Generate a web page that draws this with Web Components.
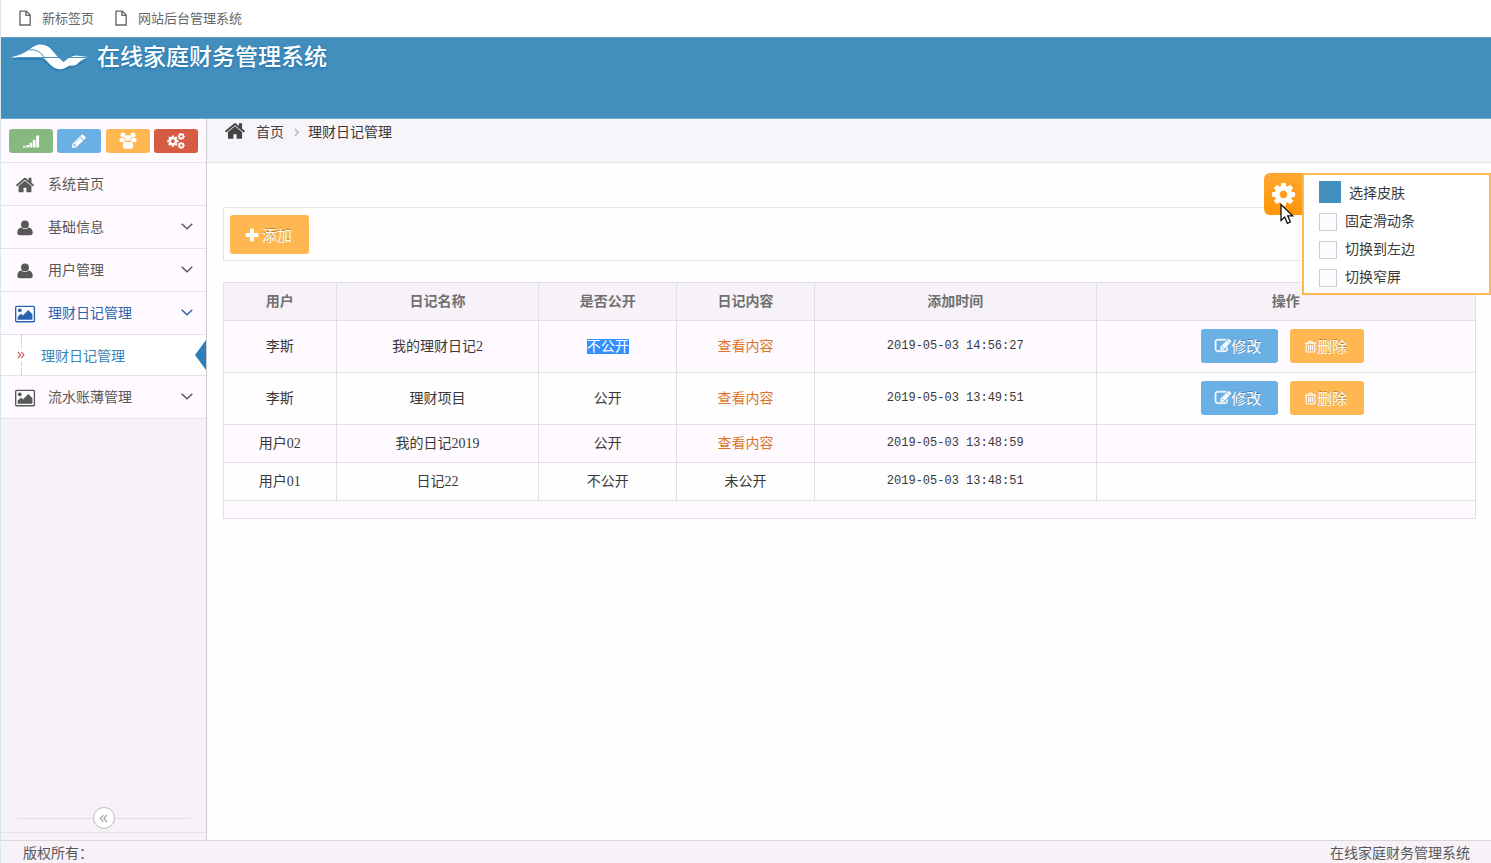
<!DOCTYPE html>
<html lang="zh-CN">
<head>
<meta charset="utf-8">
<title>在线家庭财务管理系统</title>
<style>
    html, body {
        margin: 0;
        height: 100%;
    }
    body {
        font-family: "Noto Sans CJK SC", sans-serif;
        font-size: 14px;
        line-height: 20px;
        color: #393939;
        background: #fefefe;
        --line: #e3e2e5;
        --panel: #f6f2f8;
        --tint: #fefaff;
        --blue: #428ebd;
        --orange: #ffb752;
    }
</style>
</head>
<body>
<finance-app>
    <bookmark-bar slot="top"></bookmark-bar>
    <app-header slot="top" data-title="在线家庭财务管理系统"></app-header>
    <side-bar slot="side">
        <side-item data-icon="home" data-label="系统首页"></side-item>
        <side-item data-icon="user" data-label="基础信息" data-more></side-item>
        <side-item data-icon="user" data-label="用户管理" data-more></side-item>
        <side-item data-icon="image" data-label="理财日记管理" data-more class="open">
            <side-subitem data-label="理财日记管理"></side-subitem>
        </side-item>
        <side-item data-icon="image" data-label="流水账薄管理" data-more></side-item>
    </side-bar>
    <bread-crumbs data-page="理财日记管理"></bread-crumbs>
    <tool-bar>
        <action-button class="large" data-icon="plus" data-color="#ffb752">添加</action-button>
    </tool-bar>
    <diary-table></diary-table>
    <skin-settings slot="settings"></skin-settings>
    <app-footer slot="bottom">
        <span>版权所有：</span>
        <span>在线家庭财务管理系统</span>
    </app-footer>
</finance-app>

<script>
const ICONS = {
    home: '<path d="M1408 992v480q0 26-19 45t-45 19h-384v-384h-256v384h-384q-26 0-45-19t-19-45v-480q0-1 .5-3t.5-3l575-474 575 474q1 2 1 6zm223-69l-62 74q-8 9-21 11h-3q-13 0-21-7l-692-577-692 577q-12 8-24 7-13-2-21-11l-62-74q-8-10-7-23.5t11-21.5l719-599q32-26 76-26t76 26l244 204v-195q0-14 9-23t23-9h192q14 0 23 9t9 23v408l219 182q10 8 11 21.5t-7 23.5z" transform="translate(64 0)"/>',
    cog: '<path d="M1152 896q0-106-75-181t-181-75-181 75-75 181 75 181 181 75 181-75 75-181zm512-109v222q0 12-8 23t-20 13l-185 28q-19 54-39 91 35 50 107 138 10 12 10 25t-9 23q-27 37-99 108t-94 71q-12 0-26-9l-138-108q-44 23-91 38-16 136-29 186-7 28-36 28h-222q-14 0-24.5-8.5t-11.500-21.500l-28-184q-49-16-90-37l-141 107q-10 9-25 9-14 0-25-11-126-114-165-168-7-10-7-23 0-12 8-23 15-21 51-66.500t54-70.500q-27-50-41-99l-183-27q-13-2-21-12.500t-8-23.500v-222q0-12 8-23t19-13l186-28q14-46 39-92-40-57-107-138-10-12-10-24 0-10 9-23 26-36 98.500-107.500t94.500-71.500q13 0 26 10l138 107q44-23 91-38 16-136 29-186 7-28 36-28h222q14 0 24.500 8.500t11.500 21.500l28 184q49 16 90 37l142-107q9-9 24-9 13 0 25 10 129 119 165 170 7 8 7 22 0 12-8 23-15 21-51 66.500t-54 70.500q26 50 41 98l183 28q13 2 21 12.500t8 23.500z"/>',
    pencil: '<path d="M491 1536l91-91-235-235-91 91v107h128v128h107zm523-928q0-22-22-22-10 0-17 7l-542 542q-7 7-7 17 0 22 22 22 10 0 17-7l542-542q7-7 7-17zm-54-192l416 416-832 832h-416v-416zm683 96q0 53-37 90l-166 166-416-416 166-165q36-38 90-38 53 0 91 38l235 234q37 39 37 91z"/>',
    edit: '<path d="M888 1184l116-116-152-152-116 116v56h96v96h56zm440-720q-16-16-33 1l-350 350q-17 17-1 33t33-1l350-350q17-17 1-33zm80 594v190q0 119-84.500 203.500t-203.500 84.500h-832q-119 0-203.500-84.500t-84.500-203.500v-832q0-119 84.500-203.500t203.500-84.500h832q63 0 117 25 15 7 18 23 3 17-9 29l-49 49q-14 14-32 8-23-6-45-6h-832q-66 0-113 47t-47 113v832q0 66 47 113t113 47h832q66 0 113-47t47-113v-126q0-13 9-22l64-64q15-15 35-7t20 29zm-96-738l288 288-672 672h-288v-288zm444 132l-92 92-288-288 92-92q28-28 68-28t68 28l152 152q28 28 28 68t-28 68z" stroke="currentColor" stroke-width="60"/>',
    user: '<circle cx="896" cy="490" r="440"/><path d="M480 830q-400 80-450 560-10 310 290 310h1152q300 0 290-310-50-480-450-560-170 170-416 170t-416-170z"/>',
    plus: '<path d="M680 192h432v488h488v432h-488v488h-432v-488h-488v-432h488z"/>',
    signal: '<path d="M0 1450h300v180H0zM370 1330h300v300H370zM740 1100h300v530H740zM1110 750h300v880h-300zM1480 280h320v1350h-320z"/>',
    users: '<circle cx="330" cy="230" r="280"/><circle cx="1462" cy="230" r="280"/><circle cx="896" cy="560" r="340"/><path d="M-60 840q0-330 180-300 190 90 360 0 0 250 130 380-200 0-260 110H120q-180-20-180-190zM1852 840q0-330-180-300-190 90-360 0 0 250-130 380 200 0 260 110h230q180-20 180-190zM590 940q-270 60-270 520 0 290 220 290h712q220 0 220-290 0-460-270-520-130 100-306 100T590 940z"/>',
    image: '<path fill-rule="evenodd" d="M150 150h1500q150 0 150 150v1200q0 150-150 150H150q-150 0-150-150V300q0-150 150-150zm20 120q-50 0-50 50v1160q0 50 50 50h1460q50 0 50-50V320q0-50-50-50z"/><circle cx="430" cy="570" r="165"/><path d="M240 1410v-270l300-280 170 160 480-480 370 370v500z"/>',
    trash: '<path fill="none" stroke="currentColor" stroke-width="150" d="M150 430h1500M600 420l100-250h400l100 250M300 440v1060q0 160 140 160h910q140 0 140-160V440M630 690v740M896 690v740M1160 690v740"/>',
    down: '<path fill="none" stroke="currentColor" stroke-width="220" d="M100 560l796 746 796-746"/>',
    right: '<path fill="none" stroke="currentColor" stroke-width="270" d="M560 200l696 696-696 696"/>',
    dblright: '<path fill="none" stroke="currentColor" stroke-width="260" d="M200 200l600 696-600 696M950 200l600 696-600 696"/>',
    dblleft: '<path fill="none" stroke="currentColor" stroke-width="250" d="M850 200L250 896l600 696M1550 200L950 896l600 696"/>',
    file: '<path fill="none" stroke="currentColor" stroke-width="150" d="M330 120h700l450 450v1110H330zM1000 120v480h480"/>'
};
// three wheels built from the single one
ICONS.cogs = `<g transform="translate(-190 170) scale(.82)">${ICONS.cog}</g>
    <g transform="translate(1020 -80) scale(.52)">${ICONS.cog}</g>
    <g transform="translate(1020 930) scale(.52)">${ICONS.cog}</g>`;

function icon(name, size) {
    return `<svg class="icon" width="${size}" height="${size}" viewBox="0 0 1792 1792" fill="currentColor" overflow="visible" aria-hidden="true">${ICONS[name]}</svg>`;
}

class FinanceApp extends HTMLElement {
    constructor() {
        super();
        this.attachShadow({ mode: "open" });
        this.shadowRoot.innerHTML = `
            <style>
                :host {
                    display: flex;
                    flex-direction: column;
                    min-height: 100vh;
                    box-sizing: border-box;
                    border-left: 1px solid #dbe5ec;
                }
                .body {
                    display: flex;
                    flex: 1;
                }
                main {
                    flex: 1;
                    min-width: 0;
                    position: relative;
                }
            </style>
            <slot name="top"></slot>
            <div class="body">
                <slot name="side"></slot>
                <main><slot></slot><slot name="settings"></slot></main>
            </div>
            <slot name="bottom"></slot>
        `;
    }
}

class BookmarkBar extends HTMLElement {
    constructor() {
        super();
        this.attachShadow({ mode: "open" });
        this.shadowRoot.innerHTML = `
            <style>
                :host {
                    display: block;
                    background: #fff;
                }
                nav {
                    display: flex;
                    gap: 19px;
                    padding: 8px 16px 9px;
                }
                a {
                    display: flex;
                    align-items: center;
                    gap: 9px;
                    font-size: 13px;
                    color: #666;
                    text-decoration: none;
                }
            </style>
            <nav>
                <a href="#">${icon("file", 16)}新标签页</a>
                <a href="#">${icon("file", 16)}网站后台管理系统</a>
            </nav>
        `;
    }
}

class AppHeader extends HTMLElement {
    constructor() {
        super();
        this.attachShadow({ mode: "open" });
    }

    connectedCallback() {
        const title = this.getAttribute("data-title");
        this.shadowRoot.innerHTML = `
            <style>
                :host {
                    display: block;
                    background: var(--blue);
                    border-top: 1px solid #5f9dc2;
                    border-bottom: 1px solid #6fabd0;
                }
                header {
                    display: flex;
                    align-items: flex-start;
                    gap: 9px;
                    min-height: 76px;
                    padding: 4px 11px 0;
                }
                h1 {
                    margin: 0;
                    font: 500 23px/26px "Noto Sans CJK SC", sans-serif;
                    color: #fff;
                    text-shadow: 0 1px 3px #1a6fa8;
                }
            </style>
            <header>
                <svg width="76" height="30" viewBox="0 0 76 30" aria-hidden="true">
                    <path fill="none" stroke="#1d6fa4" stroke-width="2" opacity=".5" d="M1 17h28C34 17 36 26 46 28q6 0 12-3 6 1 15-8"/>
                    <path fill="#fff" d="M0 15Q10 13 18 7 25 1 32 3C40 5 42 12 48 17q5 5 10 6-6 5-12 4C37 25 35 16 29 15.500H0z"/>
                    <path fill="#fff" d="M51 21q6-7 13-7.500L76 15q-7 3-12 8-6 2-13-2z"/>
                    <path fill="none" stroke="#4a93c2" d="M17 8Q27 6 33 16.500M5 15.500h70"/>
                </svg>
                <h1>${title}</h1>
            </header>
        `;
    }
}

class SideBar extends HTMLElement {
    constructor() {
        super();
        this.attachShadow({ mode: "open" });
        this.shadowRoot.innerHTML = `
            <style>
                :host {
                    display: flex;
                    flex-direction: column;
                    flex: none;
                    width: 205px;
                    background: var(--panel);
                    border-right: 1px solid #ccc;
                }
                .shortcuts {
                    display: flex;
                    justify-content: space-between;
                    padding: 10px 8px 9px;
                    background: var(--tint);
                    border-bottom: 1px solid var(--line);
                }
                .shortcuts button {
                    display: flex;
                    align-items: center;
                    justify-content: center;
                    width: 44px;
                    height: 24px;
                    padding: 0;
                    border: 0;
                    border-radius: 3px;
                    color: #fff;
                }
                .green { background: #87b87f; }
                .blue { background: #6bb0e4; }
                .orange { background: #ffb752; }
                .red { background: #d55b42; }
                .toggle {
                    display: flex;
                    align-items: center;
                    margin-top: auto;
                    padding: 0 16px 3px 16px;
                    border-bottom: 1px solid var(--line);
                }
                .toggle::before, .toggle::after {
                    content: "";
                    flex: 1;
                    border-top: 1px solid #e2dfe4;
                }
                .toggle button {
                    display: flex;
                    align-items: center;
                    justify-content: center;
                    width: 22px;
                    height: 22px;
                    padding: 0;
                    border: 1px solid #bbb;
                    border-radius: 50%;
                    background: #fff;
                    color: #aaa;
                }
                .foot {
                    height: 7px;
                }
            </style>
            <div class="shortcuts">
                <button class="green" aria-label="统计">${icon("signal", 16)}</button>
                <button class="blue" aria-label="编辑">${icon("pencil", 16)}</button>
                <button class="orange" aria-label="用户">${icon("users", 16)}</button>
                <button class="red" aria-label="设置">${icon("cogs", 16)}</button>
            </div>
            <slot></slot>
            <div class="toggle"><button aria-label="收起">${icon("dblleft", 9)}</button></div>
            <div class="foot"></div>
        `;
    }
}

class SideItem extends HTMLElement {
    constructor() {
        super();
        this.attachShadow({ mode: "open" });
    }

    connectedCallback() {
        const name = this.getAttribute("data-icon");
        const label = this.getAttribute("data-label");
        const more = this.hasAttribute("data-more");
        const sizes = { home: 20, user: 16, image: 20 };
        this.shadowRoot.innerHTML = `
            <style>
                :host {
                    display: block;
                    border-bottom: 1px solid var(--line);
                    background: var(--tint);
                    color: #585858;
                }
                :host(.open) {
                    color: #2b64ae;
                }
                a {
                    display: flex;
                    align-items: center;
                    box-sizing: border-box;
                    height: 42px;
                    padding: 0 13px 2px 10px;
                    color: inherit;
                    text-decoration: none;
                }
                .mark {
                    display: flex;
                    justify-content: center;
                    width: 28px;
                    margin-right: 9px;
                    padding-top: 3px;
                }
                .text {
                    flex: 1;
                }
            </style>
            <a href="#">
                <span class="mark">${icon(name, sizes[name])}</span>
                <span class="text">${label}</span>
                ${more ? icon("down", 12) : ""}
            </a>
            <slot></slot>
        `;
    }
}

class SideSubitem extends HTMLElement {
    constructor() {
        super();
        this.attachShadow({ mode: "open" });
    }

    connectedCallback() {
        this.shadowRoot.innerHTML = `
            <style>
                :host {
                    display: block;
                    border-top: 1px solid var(--line);
                    background: #fff;
                }
                a {
                    display: flex;
                    align-items: center;
                    height: 40px;
                    color: #3b85b8;
                    text-decoration: none;
                }
                .tree {
                    display: flex;
                    flex-direction: column;
                    align-items: center;
                    align-self: stretch;
                    width: 40px;
                    gap: 3px;
                    color: #c8605a;
                }
                .tree::before, .tree::after {
                    content: "";
                    flex: 1;
                    border-left: 1px dotted #9dbdd6;
                }
                .arrow {
                    width: 11px;
                    height: 30px;
                    margin-left: auto;
                    background: #2b7dbc;
                    clip-path: polygon(100% 0, 100% 100%, 0 50%);
                }
            </style>
            <a href="#">
                <span class="tree">${icon("dblright", 8)}</span>
                <span>${this.getAttribute("data-label")}</span>
                <span class="arrow"></span>
            </a>
        `;
    }
}

class BreadCrumbs extends HTMLElement {
    constructor() {
        super();
        this.attachShadow({ mode: "open" });
    }

    connectedCallback() {
        this.shadowRoot.innerHTML = `
            <style>
                :host {
                    display: block;
                    background: #f7f5f9;
                    border-bottom: 1px solid #e5e5e5;
                }
                nav {
                    display: flex;
                    align-items: center;
                    padding: 1px 17px 20px;
                }
                a {
                    display: flex;
                    align-items: center;
                    gap: 10px;
                    color: #444;
                    text-decoration: none;
                }
                .sep {
                    display: flex;
                    padding: 2px 7px 0 8px;
                    color: #b2b6bf;
                }
            </style>
            <nav>
                <a href="#">${icon("home", 22)}首页</a>
                <span class="sep">${icon("right", 9)}</span>
                <span>${this.getAttribute("data-page")}</span>
            </nav>
        `;
    }
}

class ToolBar extends HTMLElement {
    constructor() {
        super();
        this.attachShadow({ mode: "open" });
        this.shadowRoot.innerHTML = `
            <style>
                :host {
                    display: flex;
                    margin: 44px 15px 21px 16px;
                    padding: 7px 6px 6px;
                    border: 1px solid #e6e6e6;
                }
            </style>
            <slot></slot>
        `;
    }
}

class ActionButton extends HTMLElement {
    constructor() {
        super();
        this.attachShadow({ mode: "open" });
    }

    connectedCallback() {
        const name = this.getAttribute("data-icon");
        const color = this.getAttribute("data-color");
        this.shadowRoot.innerHTML = `
            <style>
                :host {
                    display: inline-flex;
                }
                button {
                    display: flex;
                    align-items: center;
                    height: 34px;
                    padding: 0 17px 0 14px;
                    border: 0;
                    border-radius: 3px;
                    background: ${color};
                    color: #fff;
                    font: 15px/22px "Noto Sans CJK SC", sans-serif;
                    text-shadow: 0 -1px 0 rgba(0, 0, 0, .25);
                }
                :host(.large) button {
                    height: 39px;
                    gap: 2px;
                    padding: 0 17px 0 14px;
                }
            </style>
            <button>${icon(name, name === "trash" ? 13 : 16)}<slot></slot></button>
        `;
    }
}

class DiaryTable extends HTMLElement {
    constructor() {
        super();
        this.attachShadow({ mode: "open" });
    }

    connectedCallback() {
        const rows = [
            ["李斯", "我的理财日记2", "不公开", true, "2019-05-03 14:56:27", true],
            ["李斯", "理财项目", "公开", true, "2019-05-03 13:49:51", true],
            ["用户02", "我的日记2019", "公开", true, "2019-05-03 13:48:59", false],
            ["用户01", "日记22", "不公开", false, "2019-05-03 13:48:51", false]
        ];
        const actions = `<div class="actions">
            <action-button data-icon="edit" data-color="#6bb0e4">修改</action-button>
            <action-button data-icon="trash" data-color="#ffb752">删除</action-button>
        </div>`;
        const body = rows.map(([user, name, open, link, time, own], i) => `
            <tr>
                <td>${user}</td>
                <td>${name}</td>
                <td>${i === 0 ? `<mark>${open}</mark>` : open}</td>
                <td>${link ? '<a href="#">查看内容</a>' : "未公开"}</td>
                <td class="time">${time}</td>
                <td>${own ? actions : ""}</td>
            </tr>`).join("");

        this.shadowRoot.innerHTML = `
            <style>
                :host {
                    display: block;
                    margin: 0 15px 0 16px;
                }
                table {
                    width: 100%;
                    table-layout: fixed;
                    border-collapse: collapse;
                    font-family: "Liberation Serif", "Noto Sans CJK SC", serif;
                }
                th, td {
                    padding: 8px;
                    border: 1px solid #e0dfe1;
                    text-align: center;
                    line-height: 21px;
                }
                th {
                    background: var(--panel);
                    color: #707070;
                    font-weight: bold;
                }
                tbody tr:nth-child(odd) {
                    background: var(--tint);
                }
                .time {
                    font-family: "Liberation Mono", monospace;
                    font-size: 12px;
                }
                .blank td {
                    height: 17px;
                    padding: 0;
                }
                a {
                    color: #dd7528;
                    text-decoration: none;
                }
                mark {
                    background: #3390ff;
                    color: #fff;
                    display: inline-block;
                    line-height: 15px;
                }
                .actions {
                    display: flex;
                    justify-content: center;
                    gap: 12px;
                    padding: 0 6px 1px 0;
                }
            </style>
            <table>
                <colgroup>
                    <col style="width: 9%"><col style="width: 16.2%"><col style="width: 11%">
                    <col style="width: 11%"><col style="width: 22.5%"><col style="width: 30.3%">
                </colgroup>
                <thead>
                    <tr><th>用户</th><th>日记名称</th><th>是否公开</th><th>日记内容</th><th>添加时间</th><th>操作</th></tr>
                </thead>
                <tbody>${body}
                    <tr class="blank"><td colspan="6"></td></tr>
                </tbody>
            </table>
        `;
    }
}

class SkinSettings extends HTMLElement {
    constructor() {
        super();
        this.attachShadow({ mode: "open" });
        this.shadowRoot.innerHTML = `
            <style>
                :host {
                    position: absolute;
                    top: 54px;
                    right: 0;
                    display: flex;
                    align-items: flex-start;
                }
                .gear {
                    display: flex;
                    align-items: center;
                    justify-content: center;
                    width: 38px;
                    height: 42px;
                    padding: 0;
                    border: 0;
                    border-radius: 6px 0 0 6px;
                    background: linear-gradient(#ffa830, #ff9408);
                    color: #fff;
                }
                .box {
                    display: flex;
                    flex-direction: column;
                    gap: 8px;
                    width: 170px;
                    padding: 7px 0 7px 15px;
                    border: 2px solid var(--orange);
                    background: #fff;
                }
                .row {
                    display: flex;
                    align-items: center;
                    gap: 8px;
                    height: 20px;
                }
                .swatch {
                    width: 22px;
                    height: 22px;
                    padding: 0;
                    border: 0;
                    background: var(--blue);
                }
                input {
                    appearance: none;
                    width: 18px;
                    height: 18px;
                    margin: 4px 0 0;
                    border: 1px solid #d0cdd2;
                    background: var(--tint);
                }
                .pointer {
                    position: absolute;
                    left: 16px;
                    top: 30px;
                }
            </style>
            <button class="gear" aria-label="设置">${icon("cog", 27)}</button>
            <div class="box">
                <div class="row"><button class="swatch" id="skin"></button><label for="skin">选择皮肤</label></div>
                <div class="row"><input type="checkbox" id="scroll"><label for="scroll">固定滑动条</label></div>
                <div class="row"><input type="checkbox" id="left"><label for="left">切换到左边</label></div>
                <div class="row"><input type="checkbox" id="narrow"><label for="narrow">切换窄屏</label></div>
            </div>
            <svg class="pointer" width="14" height="22" viewBox="0 0 14 22" aria-hidden="true">
                <path fill="#fff" stroke="#111" stroke-width="1.3" d="M1 1.500v16l3.700-3.500 2.700 6.300 3-1.300-2.700-6.200h5z"/>
            </svg>
        `;
    }
}

class AppFooter extends HTMLElement {
    constructor() {
        super();
        this.attachShadow({ mode: "open" });
        this.shadowRoot.innerHTML = `
            <style>
                :host {
                    display: flex;
                    justify-content: space-between;
                    padding: 1px 21px 1px 22px;
                    border-top: 1px solid #d9d8db;
                    background: var(--panel);
                    color: #585858;
                }
            </style>
            <slot></slot>
        `;
    }
}

customElements.define("finance-app", FinanceApp);
customElements.define("bookmark-bar", BookmarkBar);
customElements.define("app-header", AppHeader);
customElements.define("side-bar", SideBar);
customElements.define("side-item", SideItem);
customElements.define("side-subitem", SideSubitem);
customElements.define("bread-crumbs", BreadCrumbs);
customElements.define("tool-bar", ToolBar);
customElements.define("action-button", ActionButton);
customElements.define("diary-table", DiaryTable);
customElements.define("skin-settings", SkinSettings);
customElements.define("app-footer", AppFooter);
</script>
</body>
</html>
